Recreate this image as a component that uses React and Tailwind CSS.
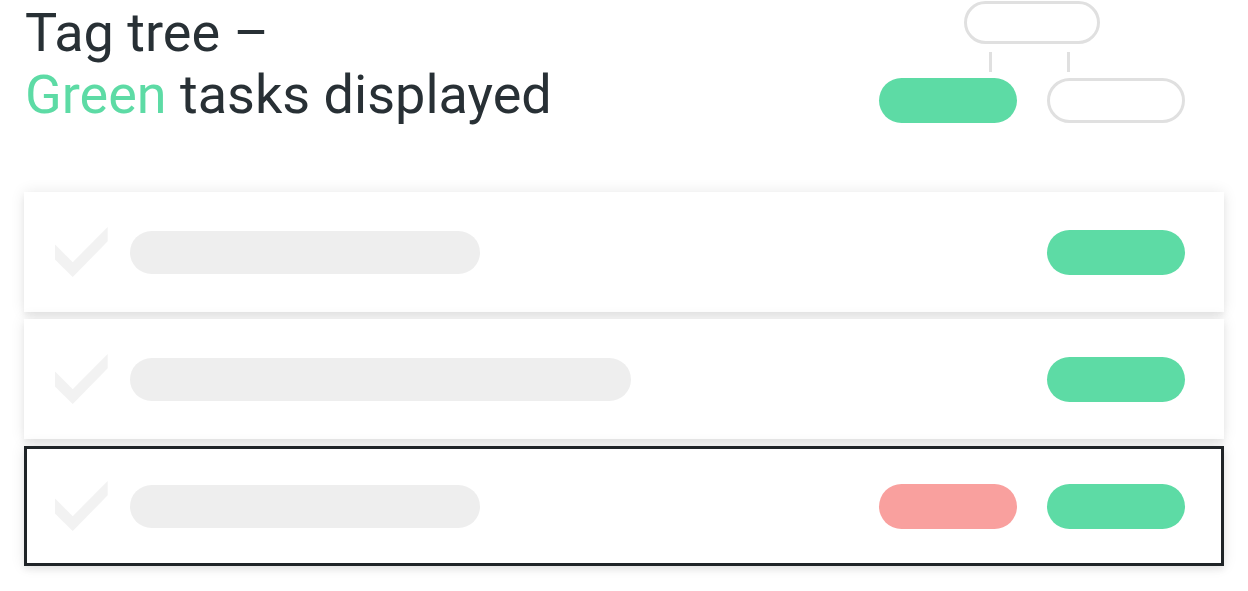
import React from "react";

const GREEN = "bg-[#5ddba5]";

function Check() {
    return (
        <svg width="53" height="50" viewBox="0 0 53 50" className="shrink-0">
            <polygon points="0,17.6 17.7,35.3 52.7,0 52.7,14.3 17.7,50 0,32.6" fill="#f2f2f2" />
        </svg>
    );
}

function Pill({ color }) {
    return <div className={`w-[138px] h-[45px] rounded-full ${color}`} />;
}

function TaskRow({ barWidth, tags, selected }) {
    return (
        <div
            className={`h-[120px] bg-white flex items-center shadow-[0_0_14px_rgba(0,0,0,0.09),0_4px_6px_rgba(0,0,0,0.06)] ${
                selected ? "border-[3px] border-[#1f2427] pl-[28px] pr-[36px]" : "pl-[31px] pr-[39px]"
            }`}
        >
            <Check />
            <div className="ml-[22px] h-[43px] rounded-full bg-[#eeeeee]" style={{ width: barWidth }} />
            <div className="ml-auto flex gap-[30px]">
                {tags.map((t, i) => (
                    <Pill key={i} color={t} />
                ))}
            </div>
        </div>
    );
}

export default function App() {
    return (
        <div className="w-full h-[591px] bg-white px-6 font-['Roboto',sans-serif] overflow-hidden">
            <div className="flex justify-between items-start h-[126px]">
                <h1 className="pt-[2px] pl-[1px] text-[54px] leading-[62px] font-normal text-[#283035]">
                    Tag tree –<br />
                    <span className="text-[#5ddba5]">Green</span> tasks displayed
                </h1>

                <div className="mr-[39px] w-[306px] flex flex-col items-center pt-[1px]">
                    <div className="w-[136px] h-[43px] rounded-full border-[3px] border-[#e0e0e0]" />
                    <div className="w-full flex pl-[110px] gap-[75px] mt-[8px]">
                        <div className="w-[3px] h-[20px] bg-[#e0e0e0]" />
                        <div className="w-[3px] h-[20px] bg-[#e0e0e0]" />
                    </div>
                    <div className="flex gap-[30px] mt-[6px]">
                        <Pill color={GREEN} />
                        <div className="w-[138px] h-[45px] rounded-full border-[3px] border-[#e0e0e0]" />
                    </div>
                </div>
            </div>

            <div className="mt-[66px] flex flex-col gap-[7px]">
                <TaskRow barWidth={350} tags={[GREEN]} />
                <TaskRow barWidth={501} tags={[GREEN]} />
                <TaskRow barWidth={350} tags={["bg-[#f9a09e]", GREEN]} selected />
            </div>
        </div>
    );
}
